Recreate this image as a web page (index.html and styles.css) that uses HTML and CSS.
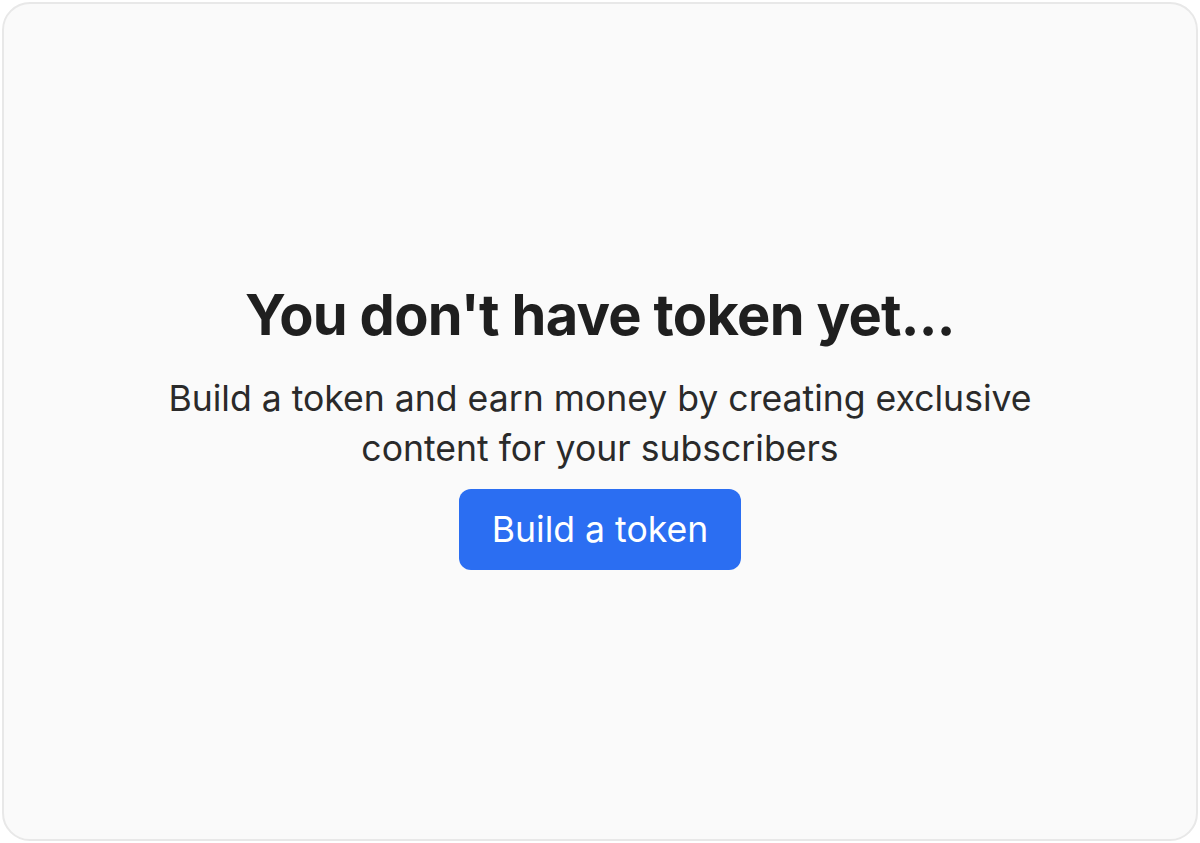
FILE: index.html
```html
<!DOCTYPE html>
<html>
<head>
    <meta charset="utf-8"/>
    <title>Token</title>
    <link rel="stylesheet" href="styles.css">
</head>
<body>
<div class="card">
    <div class="empty">
        <h1 class="empty-title">You don't have token yet...</h1>
        <p class="empty-text">Build a token and earn money by creating exclusive content for your subscribers</p>
        <a class="btn" href="#">Build a token</a>
    </div>
</div>
</body>
</html>
```

FILE: styles.css
```css
* {
    margin: 0;
    padding: 0;
    box-sizing: border-box;
}
html, body {
    height: 100%;
}
body {
    background: #fff;
    font-family: Inter, "Noto Sans", sans-serif;
    color: #1f1f1f;
    padding: 2px;
}
.card {
    height: 100%;
    background: #fafafa;
    border: 2px solid #e8e8e8;
    border-radius: 28px;
    padding-top: 8px;
    display: flex;
    align-items: center;
    justify-content: center;
}
.empty {
    display: flex;
    flex-direction: column;
    align-items: center;
    text-align: center;
    width: 900px;
}
.empty-title {
    font-size: 56px;
    font-weight: 700;
    line-height: 68px;
    letter-spacing: -0.7px;
    margin-bottom: 25px;
}
.empty-text {
    font-size: 35.6px;
    line-height: 50px;
    color: #2a2a2a;
    margin-bottom: 15px;
}
.btn {
    display: block;
    background: #2b6ef2;
    color: #fff;
    text-decoration: none;
    font-size: 35.6px;
    line-height: 81px;
    padding: 0 33px;
    border-radius: 12px;
}
```
